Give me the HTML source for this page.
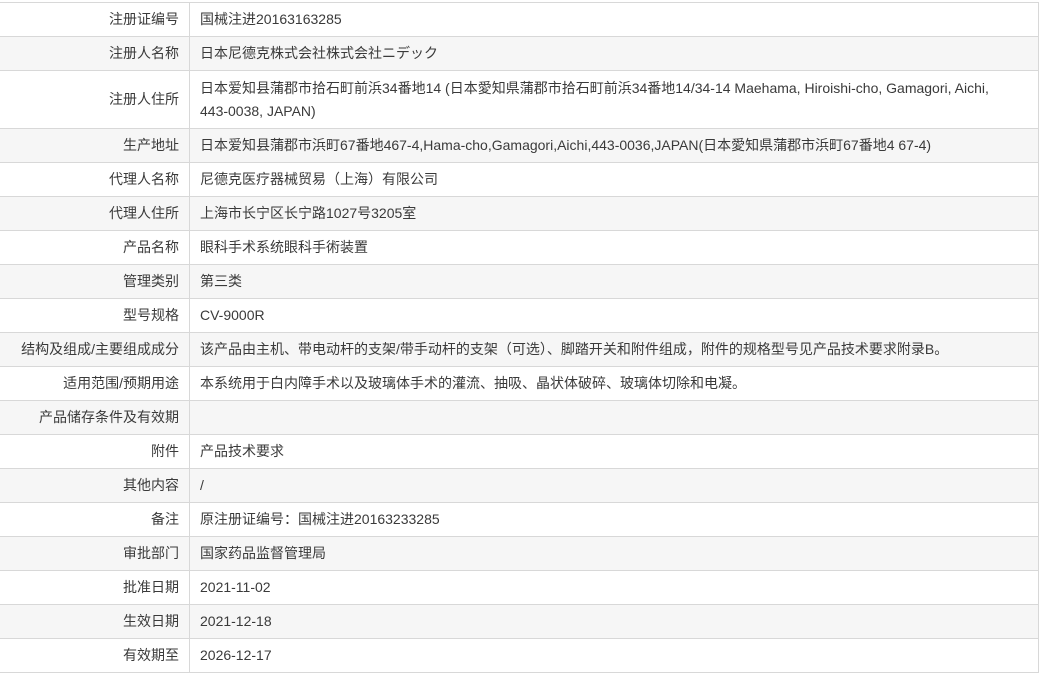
<!DOCTYPE html>
<html><head><meta charset="utf-8"><style>
body{margin:0;background:#fff;font-family:"Liberation Sans","Noto Sans CJK SC",sans-serif;font-size:14px;color:#3a3a3a;}
table{position:absolute;left:0;top:2px;width:1039px;border-collapse:collapse;}
td{border-top:1px solid #d8d8d8;border-bottom:1px solid #d8d8d8;height:33px;padding:0 10px;line-height:23px;}
td:first-child{width:169px;text-align:right;border-right:1px solid #d8d8d8;}
td:last-child{border-right:1px solid #d8d8d8;}
tr:nth-child(even) td{background:#f6f6f6;}
tr.tall td{height:57px;}
</style></head><body>
<table>
<tr><td>注册证编号</td><td>国械注进20163163285</td></tr>
<tr><td>注册人名称</td><td>日本尼德克株式会社株式会社ニデック</td></tr>
<tr class="tall"><td>注册人住所</td><td>日本爱知县蒲郡市拾石町前浜34番地14 (日本愛知県蒲郡市拾石町前浜34番地14/34-14 Maehama, Hiroishi-cho, Gamagori, Aichi,<br>443-0038, JAPAN)</td></tr>
<tr><td>生产地址</td><td>日本爱知县蒲郡市浜町67番地467-4,Hama-cho,Gamagori,Aichi,443-0036,JAPAN(日本愛知県蒲郡市浜町67番地4 67-4)</td></tr>
<tr><td>代理人名称</td><td>尼德克医疗器械贸易（上海）有限公司</td></tr>
<tr><td>代理人住所</td><td>上海市长宁区长宁路1027号3205室</td></tr>
<tr><td>产品名称</td><td>眼科手术系统眼科手術装置</td></tr>
<tr><td>管理类别</td><td>第三类</td></tr>
<tr><td>型号规格</td><td>CV-9000R</td></tr>
<tr><td>结构及组成/主要组成成分</td><td>该产品由主机、带电动杆的支架/带手动杆的支架（可选）、脚踏开关和附件组成，附件的规格型号见产品技术要求附录B。</td></tr>
<tr><td>适用范围/预期用途</td><td>本系统用于白内障手术以及玻璃体手术的灌流、抽吸、晶状体破碎、玻璃体切除和电凝。</td></tr>
<tr><td>产品储存条件及有效期</td><td></td></tr>
<tr><td>附件</td><td>产品技术要求</td></tr>
<tr><td>其他内容</td><td>/</td></tr>
<tr><td>备注</td><td>原注册证编号：国械注进20163233285</td></tr>
<tr><td>审批部门</td><td>国家药品监督管理局</td></tr>
<tr><td>批准日期</td><td>2021-11-02</td></tr>
<tr><td>生效日期</td><td>2021-12-18</td></tr>
<tr><td>有效期至</td><td>2026-12-17</td></tr>
</table>
</body></html>
